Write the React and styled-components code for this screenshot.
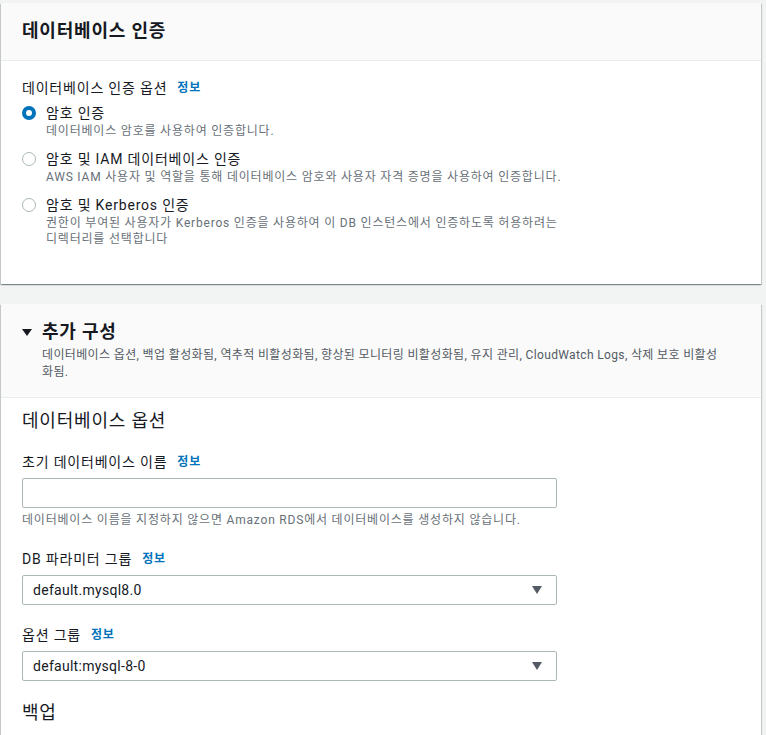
import React from 'react';
import styled, { createGlobalStyle } from 'styled-components';

const GlobalStyle = createGlobalStyle`
  html, body {
    margin: 0;
    padding: 0;
    background: #f2f3f3;
  }
  body {
    font-family: 'Roboto', 'Noto Sans CJK KR', sans-serif;
    color: #16191f;
    letter-spacing: 0.05em;
    -webkit-font-smoothing: antialiased;
  }
`;

const Page = styled.div`
  display: flex;
  flex-direction: column;
  gap: 20px;
  padding: 3px 5px 20px 1px;
`;

const Card = styled.section`
  background: #ffffff;
  box-shadow: 0 1px 1px 0 rgba(0, 28, 36, 0.3), 1px 1px 1px 0 rgba(0, 28, 36, 0.15),
    -1px 1px 1px 0 rgba(0, 28, 36, 0.15);
`;

const CardHeader = styled.header`
  background: #fafafa;
  border-bottom: 1px solid #eaeded;
  padding: ${p => (p.$tall ? '17px 40px 16px 21px' : '17px 21px 18px')};
`;

const HeaderRow = styled.div`
  display: flex;
  align-items: center;
  gap: 10px;
`;

const Caret = styled.svg`
  width: 10px;
  height: 7px;
  flex-shrink: 0;
  fill: #16191f;
`;

const CardTitle = styled.h2`
  margin: 0;
  font-size: 18px;
  line-height: 22px;
  font-weight: 700;
  color: #16191f;
`;

const HeaderDesc = styled.p`
  margin: 4px 0 0 20px;
  font-size: 12px;
  line-height: 17px;
  letter-spacing: 0.03em;
  color: #545b64;
`;

const CardBody = styled.div`
  padding: ${p => p.$pad || '17px 21px 37px'};
`;

const FieldLabel = styled.div`
  display: flex;
  align-items: center;
  gap: 10px;
  font-size: 14px;
  line-height: 20px;
  color: #16191f;
`;

const InfoLink = styled.a`
  font-size: 12px;
  font-weight: 700;
  color: #0073bb;
  text-decoration: none;
`;

const RadioGroup = styled.div`
  display: flex;
  flex-direction: column;
  gap: 10px;
  margin-top: 5px;
`;

const RadioRow = styled.label`
  display: flex;
  align-items: flex-start;
  gap: 10px;
`;

const RadioDot = styled.span`
  box-sizing: border-box;
  width: 14px;
  height: 14px;
  margin-top: 3px;
  border-radius: 50%;
  flex-shrink: 0;
  background: #ffffff;
  border: ${p => (p.$checked ? '4px solid #0073bb' : '1px solid #aab7b8')};
`;

const RadioText = styled.div`
  display: flex;
  flex-direction: column;
`;

const RadioTitle = styled.span`
  font-size: 14px;
  line-height: 20px;
  color: #16191f;
`;

const RadioDesc = styled.span`
  font-size: 12px;
  line-height: 16px;
  color: #687078;
  max-width: 520px;
`;

const SectionTitle = styled.h3`
  margin: ${p => p.$top || 0}px 0 0;
  font-size: 18px;
  line-height: 24px;
  font-weight: 400;
  color: #16191f;
`;

const Field = styled.div`
  display: flex;
  flex-direction: column;
  gap: 6px;
  margin-top: ${p => p.$top || 19}px;
`;

const TextInput = styled.input`
  box-sizing: border-box;
  width: 535px;
  height: 30px;
  margin: 0;
  padding: 4px 10px;
  border: 1px solid #aab7b8;
  border-radius: 2px;
  background: #ffffff;
  font-family: inherit;
  font-size: 14px;
  outline: none;
`;

const Hint = styled.div`
  margin-top: -2px;
  font-size: 12px;
  line-height: 16px;
  color: #687078;
`;

const Select = styled.div`
  box-sizing: border-box;
  width: 535px;
  height: 30px;
  display: flex;
  align-items: center;
  justify-content: space-between;
  padding: 0 14px 0 10px;
  border: 1px solid #aab7b8;
  border-radius: 2px;
  background: #ffffff;
  font-size: 14px;
  letter-spacing: 0.02em;
  color: #16191f;
`;

const SelectArrow = styled.svg`
  width: 10px;
  height: 8px;
  fill: #545b64;
`;

const authOptions = [
  { title: '암호 인증', desc: '데이터베이스 암호를 사용하여 인증합니다.', checked: true },
  {
    title: '암호 및 IAM 데이터베이스 인증',
    desc: 'AWS IAM 사용자 및 역할을 통해 데이터베이스 암호와 사용자 자격 증명을 사용하여 인증합니다.',
  },
  {
    title: '암호 및 Kerberos 인증',
    desc: '권한이 부여된 사용자가 Kerberos 인증을 사용하여 이 DB 인스턴스에서 인증하도록 허용하려는 디렉터리를 선택합니다',
  },
];

const DownArrow = () => (
  <SelectArrow viewBox="0 0 10 8">
    <path d="M0 0h10L5 8z" />
  </SelectArrow>
);

const App = () => (
  <>
    <GlobalStyle />
    <Page>
      <Card>
        <CardHeader>
          <CardTitle>데이터베이스 인증</CardTitle>
        </CardHeader>
        <CardBody>
          <FieldLabel>
            데이터베이스 인증 옵션 <InfoLink href="#">정보</InfoLink>
          </FieldLabel>
          <RadioGroup>
            {authOptions.map(opt => (
              <RadioRow key={opt.title}>
                <RadioDot $checked={opt.checked} />
                <RadioText>
                  <RadioTitle>{opt.title}</RadioTitle>
                  <RadioDesc>{opt.desc}</RadioDesc>
                </RadioText>
              </RadioRow>
            ))}
          </RadioGroup>
        </CardBody>
      </Card>

      <Card>
        <CardHeader $tall>
          <HeaderRow>
            <Caret viewBox="0 0 10 7">
              <path d="M0 0h10L5 7z" />
            </Caret>
            <CardTitle>추가 구성</CardTitle>
          </HeaderRow>
          <HeaderDesc>
            데이터베이스 옵션, 백업 활성화됨, 역추적 비활성화됨, 향상된 모니터링 비활성화됨, 유지 관리, CloudWatch Logs, 삭제 보호 비활성화됨.
          </HeaderDesc>
        </CardHeader>
        <CardBody $pad="11px 21px 20px">
          <SectionTitle>데이터베이스 옵션</SectionTitle>
          <Field $top={19}>
            <FieldLabel>
              초기 데이터베이스 이름 <InfoLink href="#">정보</InfoLink>
            </FieldLabel>
            <TextInput type="text" />
            <Hint>데이터베이스 이름을 지정하지 않으면 Amazon RDS에서 데이터베이스를 생성하지 않습니다.</Hint>
          </Field>
          <Field $top={21}>
            <FieldLabel>
              DB 파라미터 그룹 <InfoLink href="#">정보</InfoLink>
            </FieldLabel>
            <Select>
              default.mysql8.0
              <DownArrow />
            </Select>
          </Field>
          <Field $top={20}>
            <FieldLabel>
              옵션 그룹 <InfoLink href="#">정보</InfoLink>
            </FieldLabel>
            <Select>
              default:mysql-8-0
              <DownArrow />
            </Select>
          </Field>
          <SectionTitle $top={20}>백업</SectionTitle>
        </CardBody>
      </Card>
    </Page>
  </>
);

export default App;
